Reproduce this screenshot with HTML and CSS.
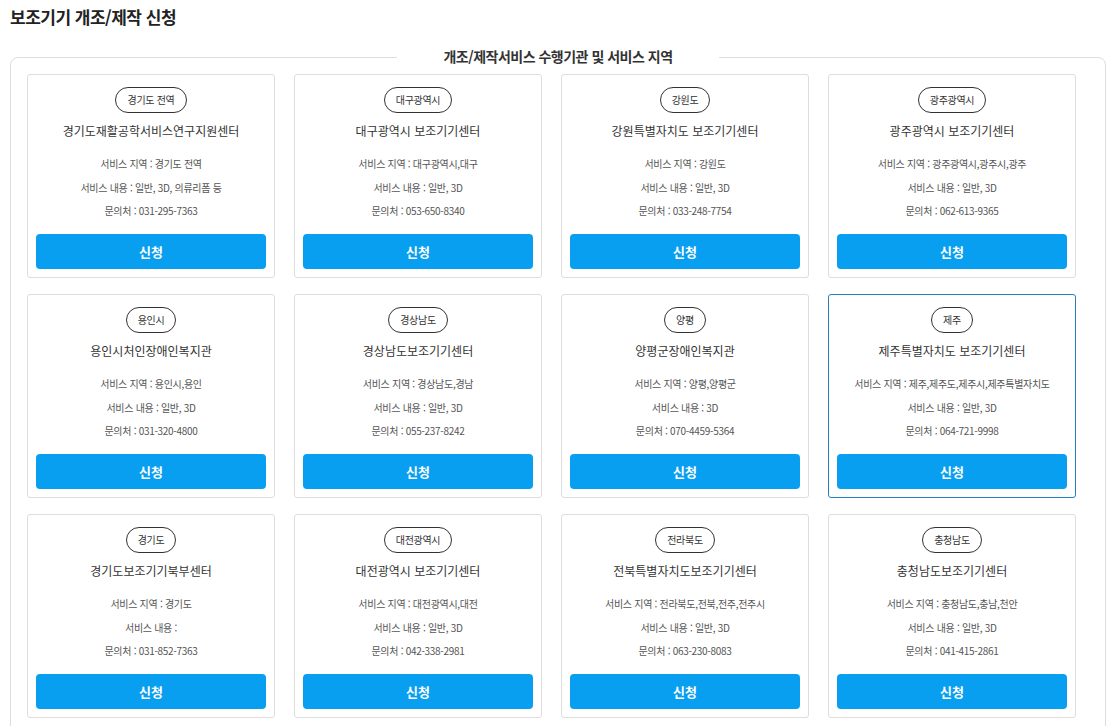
FILE: index.html
```html
<!DOCTYPE html>
<html lang="ko">
<head>
  <meta charset="UTF-8">
  <title>보조기기 개조/제작 신청</title>
  <meta name="viewport" content="width=device-width, initial-scale=1.0">
  <link rel="stylesheet" href="styles.css">
</head>
<body>
  <div class="page">
    <h1 class="page-title">보조기기 개조/제작 신청</h1>

    <fieldset class="org-box">
      <legend>개조/제작서비스 수행기관 및 서비스 지역</legend>
      <div class="org-grid">
        <div class="org-card">
          <span class="area">경기도 전역</span>
          <h3>경기도재활공학서비스연구지원센터</h3>
          <p>서비스 지역 : 경기도 전역</p>
          <p>서비스 내용 : 일반, 3D, 의류리폼 등</p>
          <p>문의처 : 031-295-7363</p>
          <button>신청</button>
        </div>
        <div class="org-card">
          <span class="area">대구광역시</span>
          <h3>대구광역시 보조기기센터</h3>
          <p>서비스 지역 : 대구광역시,대구</p>
          <p>서비스 내용 : 일반, 3D</p>
          <p>문의처 : 053-650-8340</p>
          <button>신청</button>
        </div>
        <div class="org-card">
          <span class="area">강원도</span>
          <h3>강원특별자치도 보조기기센터</h3>
          <p>서비스 지역 : 강원도</p>
          <p>서비스 내용 : 일반, 3D</p>
          <p>문의처 : 033-248-7754</p>
          <button>신청</button>
        </div>
        <div class="org-card">
          <span class="area">광주광역시</span>
          <h3>광주광역시 보조기기센터</h3>
          <p>서비스 지역 : 광주광역시,광주시,광주</p>
          <p>서비스 내용 : 일반, 3D</p>
          <p>문의처 : 062-613-9365</p>
          <button>신청</button>
        </div>

        <div class="org-card">
          <span class="area">용인시</span>
          <h3>용인시처인장애인복지관</h3>
          <p>서비스 지역 : 용인시,용인</p>
          <p>서비스 내용 : 일반, 3D</p>
          <p>문의처 : 031-320-4800</p>
          <button>신청</button>
        </div>
        <div class="org-card">
          <span class="area">경상남도</span>
          <h3>경상남도보조기기센터</h3>
          <p>서비스 지역 : 경상남도,경남</p>
          <p>서비스 내용 : 일반, 3D</p>
          <p>문의처 : 055-237-8242</p>
          <button>신청</button>
        </div>
        <div class="org-card">
          <span class="area">양평</span>
          <h3>양평군장애인복지관</h3>
          <p>서비스 지역 : 양평,양평군</p>
          <p>서비스 내용 : 3D</p>
          <p>문의처 : 070-4459-5364</p>
          <button>신청</button>
        </div>
        <div class="org-card active">
          <span class="area">제주</span>
          <h3>제주특별자치도 보조기기센터</h3>
          <p>서비스 지역 : 제주,제주도,제주시,제주특별자치도</p>
          <p>서비스 내용 : 일반, 3D</p>
          <p>문의처 : 064-721-9998</p>
          <button>신청</button>
        </div>

        <div class="org-card">
          <span class="area">경기도</span>
          <h3>경기도보조기기북부센터</h3>
          <p>서비스 지역 : 경기도</p>
          <p>서비스 내용 : </p>
          <p>문의처 : 031-852-7363</p>
          <button>신청</button>
        </div>
        <div class="org-card">
          <span class="area">대전광역시</span>
          <h3>대전광역시 보조기기센터</h3>
          <p>서비스 지역 : 대전광역시,대전</p>
          <p>서비스 내용 : 일반, 3D</p>
          <p>문의처 : 042-338-2981</p>
          <button>신청</button>
        </div>
        <div class="org-card">
          <span class="area">전라북도</span>
          <h3>전북특별자치도보조기기센터</h3>
          <p>서비스 지역 : 전라북도,전북,전주,전주시</p>
          <p>서비스 내용 : 일반, 3D</p>
          <p>문의처 : 063-230-8083</p>
          <button>신청</button>
        </div>
        <div class="org-card">
          <span class="area">충청남도</span>
          <h3>충청남도보조기기센터</h3>
          <p>서비스 지역 : 충청남도,충남,천안</p>
          <p>서비스 내용 : 일반, 3D</p>
          <p>문의처 : 041-415-2861</p>
          <button>신청</button>
        </div>
      </div>
    </fieldset>
  </div>
</body>
</html>
```

FILE: styles.css
```css
* { box-sizing: border-box; }

body {
  margin: 0;
  font-family: "Noto Sans CJK KR", "Noto Sans", sans-serif;
  background: #fff;
  color: #333;
}

.page {
  padding: 4px 10px 0;
}

.page-title {
  margin: 0;
  font-size: 17px;
  font-weight: bold;
  letter-spacing: -0.5px;
  line-height: 26px;
  color: #222;
}

.org-box {
  margin: 16px 0 0;
  padding: 5px 16px 20px;
  border: 1px solid #ddd;
  border-radius: 8px;
  min-width: 0;
}

.org-box legend {
  margin: 0 auto;
  padding: 0 46px 3px;
  font-size: 14px;
  font-weight: bold;
  letter-spacing: -0.5px;
  line-height: 20px;
  color: #333;
}

.org-grid {
  display: grid;
  grid-template-columns: repeat(4, 248px);
  column-gap: 19px;
  row-gap: 16px;
}

.org-card {
  height: 204px;
  padding: 12px 8px 8px;
  border: 1px solid #ddd;
  border-radius: 3px;
  display: flex;
  flex-direction: column;
  align-items: center;
  text-align: center;
}

.org-card.active {
  border-color: #2381bd;
}

.area {
  display: inline-block;
  height: 26px;
  padding: 0 11px;
  border: 1px solid #333;
  border-radius: 13px;
  font-size: 10px;
  line-height: 24px;
  letter-spacing: -0.3px;
  color: #333;
}

.org-card h3 {
  margin: 8px 0 11px;
  font-size: 12px;
  font-weight: normal;
  letter-spacing: 0;
  line-height: 20px;
  color: #333;
}

.org-card p {
  margin: 0;
  font-size: 10px;
  line-height: 23.5px;
  letter-spacing: -0.3px;
  color: #555;
}

.org-card button {
  margin-top: auto;
  width: 100%;
  height: 35px;
  border: none;
  border-radius: 4px;
  background: #099ff0;
  color: #fff;
  font-family: inherit;
  font-size: 13px;
  font-weight: bold;
  cursor: pointer;
}
```
